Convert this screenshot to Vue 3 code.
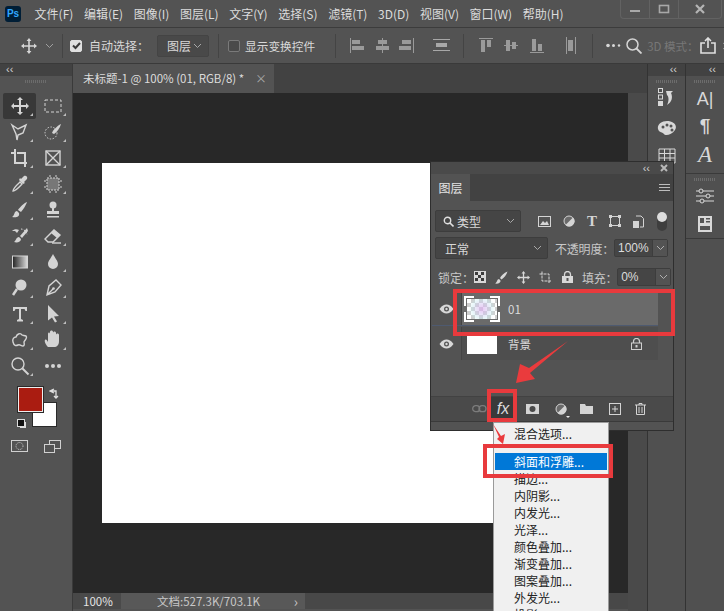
<template>
  <div class="app">
    <!-- menu bar -->
    <header class="menubar">
      <div class="ps-logo">Ps</div>
      <span v-for="m in menus" :key="m" class="menu-item">{{ m }}</span>
      <div class="win-btns">
        <span class="win-btn"><svg width="12" height="12" viewBox="0 0 12 12"><rect x="1" y="7" width="10" height="2" fill="#a8a8a8" /></svg></span>
        <span class="win-btn"><svg width="12" height="12" viewBox="0 0 12 12"><rect x="1.5" y="2.5" width="9" height="7" fill="none" stroke="#a8a8a8" stroke-width="1.6" /></svg></span>
        <span class="win-btn last"><svg width="12" height="12" viewBox="0 0 12 12"><path d="M2 2l8 8M10 2l-8 8" stroke="#b4b4b4" stroke-width="2.2" /></svg></span>
      </div>
    </header>

    <!-- options bar -->
    <div class="optionsbar">
      <svg class="move-ic" width="16" height="16" viewBox="0 0 16 16"><path d="M8 0l2.400 3H8.800v4.200H13V5.600L16 8l-3 2.400V8.800H8.800V13h1.600L8 16l-2.400-3h1.600V8.800H3v1.600L0 8l3-2.400v1.600h4.200V3H5.600z" fill="#d6d6d6" /></svg>
      <svg class="chev move-chev" width="9" height="6" viewBox="0 0 9 6"><path d="M1 1l3.500 3.500L8 1" fill="none" stroke="#a0a0a0" /></svg>
      <i class="vsep sep1"></i>
      <span class="checkbox on"><svg width="9" height="9" viewBox="0 0 9 9"><path d="M1 4.500l2.500 2.500L8 2" fill="none" stroke="#3a3a3a" stroke-width="2" /></svg></span>
      <span class="opt-label auto">自动选择：</span>
      <span class="opt-select">图层<svg class="chev" width="9" height="6" viewBox="0 0 9 6"><path d="M1 1l3.500 3.500L8 1" fill="none" stroke="#a8a8a8" /></svg></span>
      <i class="vsep sep2"></i>
      <span class="checkbox"></span>
      <span class="opt-label show">显示变换控件</span>
      <i class="vsep sep3"></i>
      <svg class="align-a" width="101" height="18" viewBox="0 0 101 18">
        <g fill="#9a9a9a">
          <rect x="0" y="1" width="1" height="15" /><rect x="2" y="3" width="8" height="4" /><rect x="2" y="9" width="12" height="4" />
          <rect x="32" y="1" width="1" height="15" /><rect x="28" y="3" width="9" height="4" /><rect x="26" y="9" width="13" height="4" />
          <rect x="52" y="3" width="9" height="4" /><rect x="49" y="9" width="12" height="4" /><rect x="63" y="1" width="1" height="15" />
        </g>
        <g fill="#a8a8a8"><rect x="83" y="2" width="17" height="1" /><rect x="86" y="6" width="11" height="4" /><rect x="83" y="13" width="17" height="1" /></g>
      </svg>
      <i class="vsep sep-mid"></i>
      <svg class="align-b" width="97" height="18" viewBox="0 0 97 18">
        <g fill="#9a9a9a">
          <rect x="0" y="1" width="14" height="1" /><rect x="2" y="3" width="4" height="12" /><rect x="8" y="3" width="4" height="7" />
          <rect x="25" y="8" width="14" height="1" /><rect x="27" y="3" width="4" height="11" /><rect x="33" y="5" width="4" height="7" />
          <rect x="51" y="15" width="14" height="1" /><rect x="53" y="2" width="4" height="12" /><rect x="59" y="7" width="4" height="7" />
          <rect x="87" y="0" width="1" height="17" /><rect x="89" y="3" width="5" height="11" /><rect x="96" y="0" width="1" height="17" />
        </g>
      </svg>
      <i class="vsep sep4"></i>
      <svg class="more" width="15" height="5" viewBox="0 0 15 5"><g fill="#d8d8d8"><circle cx="2" cy="2.500" r="1.800" /><circle cx="7.500" cy="2.500" r="1.500" /><circle cx="13" cy="2.500" r="1.200" /></g></svg>
      <svg class="opt-search" width="16" height="16" viewBox="0 0 16 16"><circle cx="6.500" cy="6.500" r="5.500" fill="none" stroke="#d4d4d4" stroke-width="1.500" /><path d="M10.500 10.500l5 5" stroke="#d4d4d4" stroke-width="1.800" /></svg>
      <span class="mode3d">3D 模式：</span>
      <svg class="share" width="16" height="17" viewBox="0 0 16 17"><path d="M5 6H1v10h14V6h-4M8 11V1M5 4l3-3 3 3" fill="none" stroke="#e0e0e0" stroke-width="1.600" /></svg>
      <svg class="tail-chev" width="6" height="8" viewBox="0 0 6 8"><path d="M1 1l4 3-4 3" fill="none" stroke="#999" /></svg>
    </div>

    <div class="body">
      <!-- left tools -->
      <aside class="toolcol">
        <div class="collapse-strip left"><span>‹‹</span></div>
        <div class="toolbar">
          <div class="grip"></div>
          <div class="tool-grid">
            <span v-for="(t, i) in tools" :key="i" class="tool" :class="{ active: i === 0 }">
              <svg width="20" height="20" viewBox="0 0 20 20" v-html="t"></svg>
              <i v-if="i % 12 !== 9" class="corner"></i>
            </span>
          </div>
          <div class="colors">
            <div class="fg"></div>
            <div class="bg"></div>
            <svg class="swap" width="11" height="11" viewBox="0 0 11 11"><path d="M1 3h6v6M5 1L1 3l4 2M5 8l2 2 2-2" fill="none" stroke="#e0e0e0" stroke-width="1.300" /></svg>
            <div class="mini-bg"></div>
            <div class="mini-fg"></div>
          </div>
          <div class="mode-row">
            <svg width="18" height="14" viewBox="0 0 18 14"><rect x=".5" y=".5" width="16" height="11" fill="none" stroke="#d0d0d0" /><circle cx="8.500" cy="6" r="3.500" fill="none" stroke="#d0d0d0" stroke-dasharray="1 1" /></svg>
            <svg width="18" height="14" viewBox="0 0 18 14"><rect x="5.500" y=".5" width="11" height="8" fill="none" stroke="#d0d0d0" /><rect x=".5" y="4.500" width="10" height="8" fill="#535353" stroke="#d0d0d0" /></svg>
          </div>
        </div>
      </aside>

      <!-- document -->
      <main class="docarea">
        <div class="tabbar">
          <div class="tab">未标题-1 @ 100% (01, RGB/8) *<span class="tab-x">×</span></div>
        </div>
        <div class="workspace">
          <div class="canvas"></div>
        </div>
        <footer class="statusbar">
          <span class="zoomval">100%</span>
          <span class="docinfo">文档:527.3K/703.1K<em>›</em></span>
        </footer>
      </main>

      <div class="scrollstrip"></div>

      <!-- collapsed docks -->
      <aside class="dock">
        <div class="collapse-strip"><span>‹‹</span></div>
        <div class="dock-panel">
          <div class="grip"></div>
          <svg width="20" height="20" viewBox="0 0 20 20"><g fill="none" stroke="#d8d8d8"><rect x="1.500" y=".5" width="4" height="4" /><rect x="1.500" y="7" width="4" height="4" /></g><rect x="1" y="13" width="5" height="5" fill="#d8d8d8" /><path d="M9 3h7l-2 2c2 4 1 9-4 12 2-4 2-8 0-10z" fill="#d8d8d8" /></svg>
          <svg width="20" height="18" viewBox="0 0 20 18"><path d="M10 2C4 2 0 6 1 10s5 3 6 5 8 1 11-4-2-9-8-9z" fill="#d8d8d8" /><g fill="#535353"><circle cx="6" cy="8" r="1.500" /><circle cx="10" cy="6" r="1.500" /><circle cx="14" cy="7" r="1.500" /><circle cx="15" cy="11" r="1.500" /></g></svg>
          <svg width="18" height="16" viewBox="0 0 18 16"><path d="M1 1h16v14H1zM1 5.500h16M1 10h16M6.500 1v14M12 1v14" fill="none" stroke="#d8d8d8" /></svg>
        </div>
      </aside>
      <aside class="dock second">
        <div class="collapse-strip"><span>‹‹</span></div>
        <div class="dock-panel tall">
          <div class="grip"></div>
          <span class="glyph-a">A|</span>
          <span class="glyph-p">¶</span>
          <span class="glyph-s">A</span>
        </div>
        <div class="dock-panel short">
          <div class="grip"></div>
          <svg width="18" height="16" viewBox="0 0 18 16"><g fill="none" stroke="#d8d8d8"><path d="M0 3h18M0 8h18M0 13h18" /><circle cx="5" cy="3" r="2" fill="#535353" /><circle cx="12" cy="8" r="2" fill="#535353" /><circle cx="6" cy="13" r="2" fill="#535353" /></g></svg>
          <svg width="14" height="16" viewBox="0 0 14 16"><rect width="14" height="16" fill="#d8d8d8" /><g fill="#535353"><rect x="2" y="2" width="4" height="5" /><rect x="8" y="2" width="4" height="1.500" /><rect x="8" y="5" width="4" height="1.500" /><rect x="2" y="10" width="10" height="4" /></g></svg>
        </div>
        <div class="dock-rest"></div>
      </aside>

      <!-- floating layers panel -->
      <section class="layers">
        <div class="layers-head">
          <span class="lh-arrows">‹‹</span>
          <svg width="8" height="8" viewBox="0 0 8 8"><path d="M1 1l6 6M7 1L1 7" stroke="#b8b8b8" stroke-width="2" /></svg>
        </div>
        <div class="layers-tabs">
          <div class="ltab">图层</div>
          <svg class="hamb" width="11" height="8" viewBox="0 0 11 8"><path d="M0 .5h11M0 3.500h11M0 6.500h11" stroke="#bdbdbd" /></svg>
        </div>
        <div class="lbody">
          <div class="filter-row">
            <div class="lselect kind">
              <svg width="11" height="11" viewBox="0 0 11 11"><circle cx="4.500" cy="4.500" r="3.200" fill="none" stroke="#e0e0e0" stroke-width="1.400" /><path d="M7 7l3.500 3.500" stroke="#e0e0e0" stroke-width="1.600" /></svg>
              <span>类型</span>
              <svg class="chev push" width="9" height="6" viewBox="0 0 9 6"><path d="M1 1l3.500 3.500L8 1" fill="none" stroke="#a8a8a8" /></svg>
            </div>
            <div class="filter-icons">
              <svg width="13" height="11" viewBox="0 0 13 11"><rect x=".5" y=".5" width="12" height="10" fill="none" stroke="#d4d4d4" /><path d="M2 9l3-4 2 2 2-2 2 4z" fill="#d4d4d4" /></svg>
              <svg width="12" height="12" viewBox="0 0 12 12"><circle cx="6" cy="6" r="5" fill="#6a6a6a" stroke="#d4d4d4" /><path d="M10 2.500A5 5 0 0 1 2.500 10z" fill="#d4d4d4" /></svg>
              <span class="t-ic">T</span>
              <svg width="12" height="12" viewBox="0 0 12 12"><rect x="1.500" y="1.500" width="9" height="9" fill="none" stroke="#d4d4d4" /><g fill="#d4d4d4"><rect width="3" height="3" /><rect x="9" width="3" height="3" /><rect y="9" width="3" height="3" /><rect x="9" y="9" width="3" height="3" /></g></svg>
              <svg width="11" height="13" viewBox="0 0 11 13"><path d="M3 1h5l2.500 2.500V12H7" fill="none" stroke="#d4d4d4" /><rect y="6" width="6" height="7" fill="#d4d4d4" /></svg>
            </div>
            <div class="toggle"><i></i></div>
          </div>
          <div class="blend-row">
            <div class="lselect blend">
              <span>正常</span>
              <svg class="chev push" width="9" height="6" viewBox="0 0 9 6"><path d="M1 1l3.500 3.500L8 1" fill="none" stroke="#a8a8a8" /></svg>
            </div>
            <span class="lbl">不透明度：</span>
            <div class="numbox"><span>100%</span><b><svg width="9" height="6" viewBox="0 0 9 6"><path d="M1 1l3.500 3.500L8 1" fill="none" stroke="#b0b0b0" /></svg></b></div>
          </div>
          <div class="lock-row">
            <span class="lbl">锁定：</span>
            <div class="lock-icons">
              <svg width="12" height="12" viewBox="0 0 12 12"><rect width="12" height="12" fill="#d8d8d8" /><g fill="#3c3c3c"><rect x="1" y="1" width="3" height="3" /><rect x="7" y="1" width="3" height="3" /><rect x="4" y="4" width="3" height="3" /><rect x="1" y="7" width="3" height="3" /><rect x="7" y="7" width="3" height="3" /></g></svg>
              <svg width="13" height="13" viewBox="0 0 13 13"><path d="M12.500.5C9 2 6 5 5 7l1.500 1.500C9 7 11.500 4 12.500.5zM4 8c-2 0-1.500 3-4 4.500 3 .5 6-.5 5.500-3z" fill="#d8d8d8" /></svg>
              <svg width="13" height="13" viewBox="0 0 16 16"><path d="M8 0l2.400 3H8.800v4.200H13V5.600L16 8l-3 2.400V8.800H8.800V13h1.600L8 16l-2.400-3h1.600V8.800H3v1.600L0 8l3-2.400v1.600h4.200V3H5.600z" fill="#d8d8d8" /></svg>
              <svg width="14" height="13" viewBox="0 0 14 13"><path d="M3 .5v9.500h9M.5 3h9.500v9" fill="none" stroke="#d8d8d8" stroke-dasharray="3 1" /></svg>
              <svg width="11" height="12" viewBox="0 0 11 12"><rect y="5" width="11" height="7" fill="#d8d8d8" /><path d="M2.500 5V3.500a3 3 0 0 1 6 0V5" fill="none" stroke="#d8d8d8" stroke-width="1.300" /><rect x="4.500" y="7" width="2" height="3" fill="#535353" /></svg>
            </div>
            <span class="lbl fill">填充：</span>
            <div class="numbox"><span>0%</span><b><svg width="9" height="6" viewBox="0 0 9 6"><path d="M1 1l3.500 3.500L8 1" fill="none" stroke="#b0b0b0" /></svg></b></div>
          </div>
          <div class="list">
            <div v-for="l in layerRows" :key="l.name" class="lrow" :class="{ sel: l.sel }">
              <span class="eye"><svg width="15" height="10" viewBox="0 0 15 10"><path d="M.5 5C3 1.500 5 .5 7.500.5S12 1.500 14.500 5C12 8.500 10 9.500 7.500 9.500S3 8.500.5 5z" fill="#d8d8d8" /><circle cx="7.500" cy="5" r="2.500" fill="#535353" /><circle cx="7.500" cy="5" r="1.200" fill="#d8d8d8" /></svg></span>
              <span class="thumb" :class="{ checker: l.sel }">
                <template v-if="l.sel"><i class="crn tl"></i><i class="crn tr"></i><i class="crn bl"></i><i class="crn br"></i></template>
              </span>
              <span class="lname">{{ l.name }}</span>
              <svg v-if="!l.sel" class="lk" width="11" height="12" viewBox="0 0 11 12"><rect x=".5" y="5" width="10" height="6.500" fill="none" stroke="#cfcfcf" /><path d="M2.500 5V3.500a3 3 0 0 1 6 0V5" fill="none" stroke="#cfcfcf" stroke-width="1.200" /><rect x="4.500" y="7" width="2" height="2.500" fill="#cfcfcf" /></svg>
            </div>
          </div>
        </div>
        <div class="lfooter">
          <svg width="15" height="8" viewBox="0 0 15 8"><g fill="none" stroke="#7c7c7c" stroke-width="1.300"><rect x=".7" y=".7" width="7" height="6" rx="3" /><rect x="7" y=".7" width="7" height="6" rx="3" /></g></svg>
          <span class="fx">fx<i></i></span>
          <svg width="13" height="10" viewBox="0 0 13 10"><rect width="13" height="10" fill="#d4d4d4" /><circle cx="6.500" cy="5" r="3" fill="#4a4a4a" /></svg>
          <span class="adj"><svg width="12" height="12" viewBox="0 0 12 12"><circle cx="6" cy="6" r="5" fill="#6a6a6a" stroke="#d4d4d4" /><path d="M10 2.500A5 5 0 0 1 2.500 10z" fill="#d4d4d4" /></svg><i></i></span>
          <svg width="13" height="10" viewBox="0 0 13 10"><path d="M0 0h5l1 2h7v8H0z" fill="#d4d4d4" /></svg>
          <svg width="12" height="12" viewBox="0 0 12 12"><rect x=".5" y=".5" width="11" height="11" fill="none" stroke="#d4d4d4" /><path d="M6 3v6M3 6h6" stroke="#d4d4d4" /></svg>
          <svg width="11" height="12" viewBox="0 0 11 12"><path d="M0 2h11M4 2V.5h3V2M1.500 2v9.500h8V2M4 4v6M7 4v6" fill="none" stroke="#d4d4d4" /></svg>
        </div>

        <!-- fx dropdown -->
        <ul class="fxmenu">
          <li v-for="m in fxItems" :key="m" :class="{ hot: m === '斜面和浮雕...' }">{{ m }}</li>
        </ul>

        <!-- red annotations -->
        <i class="redbox rb1"></i>
        <i class="redbox rb2"></i>
        <i class="redbox rb3"></i>
        <svg class="arrows" width="190" height="110" viewBox="0 0 190 110">
          <path d="M137 1L98 28 89 24 85 43 104 39 99 33z" fill="#ea3b3d" />
          <path d="M62 84L70 96 74 94 72 104 66 99 68 97z" fill="#ea3b3d" />
        </svg>
      </section>
    </div>
  </div>
</template>

<script setup>
const menus = ['文件(F)', '编辑(E)', '图像(I)', '图层(L)', '文字(Y)', '选择(S)', '滤镜(T)', '3D(D)', '视图(V)', '窗口(W)', '帮助(H)']

const s = 'fill="none" stroke="#d4d4d4" stroke-width="1.400"'
const f = 'fill="#d4d4d4"'
const tools = [
  `<path d="M10 1l3 3h-2v5h5V7l3 3-3 3v-2h-5v5h2l-3 3-3-3h2v-5H4v2l-3-3 3-3v2h5V4H7z" ${f}/>`,
  `<rect x="2" y="4" width="16" height="12" fill="none" stroke="#d4d4d4" stroke-dasharray="3 2"/>`,
  `<path d="M2 3l6 4 8-4-3 8-5 2-1 5-1-6z" ${s}/>`,
  `<circle cx="8" cy="11" r="6" fill="none" stroke="#d4d4d4" stroke-dasharray="1.500 1.500"/><path d="M9 11c1-3 5-7 9-9-1 4-4 8-7 10z" ${f}/>`,
  `<path d="M1 5h4M5 1v14h12M7 5h8v14" fill="none" stroke="#d4d4d4" stroke-width="2"/>`,
  `<rect x="3" y="3" width="14" height="14" ${s}/><path d="M3 3l14 14M17 3L3 17" ${s}/>`,
  `<path d="M3 17c0-3 6-8 7-9l2 2c-1 1-6 7-9 7z" ${s}/><path d="M11 5l3-3c2-1 4 1 3 3l-3 3 1 1-2 1-4-4 1-2z" ${f}/>`,
  `<rect x="4" y="4" width="12" height="12" fill="#777" stroke="#d4d4d4" stroke-dasharray="2 1"/><path d="M1 7h2M1 13h2M17 7h2M17 13h2M7 1v2M13 1v2M7 17v2M13 17v2" stroke="#d4d4d4"/>`,
  `<path d="M17 2c-3 1-7 5-9 8l3 2c2-2 5-7 6-10zM7 11c-3 0-2 4-5 6 4 1 8 0 7-4z" ${f}/>`,
  `<circle cx="10" cy="5" r="3.500" ${f}/><path d="M9 8h2v3h5v3H4v-3h5zM4 16h12v1.500H4z" ${f}/>`,
  `<path d="M17 2l-7 8 2 2 6-7z" ${f}/><path d="M9 11c-3 0-3 4-5 5 3 1 7 0 7-3zM2 5c2-2 5-2 7-1L7 7 5 5z" ${f}/><path d="M11 3c3 0 6 3 6 6" fill="none" stroke="#d4d4d4" stroke-dasharray="1.500 1.500"/>`,
  `<path d="M2 13l9-9 6 5-7 7H5z" ${s}/><path d="M11 4l6 5-3 3-6-5z" ${f}/><path d="M9 17h9" ${s}/>`,
  `<defs><linearGradient id="tg"><stop offset="0" stop-color="#222"/><stop offset="1" stop-color="#ddd"/></linearGradient></defs><rect x="2.500" y="4" width="15" height="12" fill="url(#tg)" stroke="#d4d4d4"/>`,
  `<path d="M10 2c2 4 5 7 5 10a5 5 0 0 1-10 0c0-3 3-6 5-10z" ${f}/>`,
  `<circle cx="11" cy="7" r="5.500" ${f}/><path d="M7 11l-4 6" stroke="#d4d4d4" stroke-width="2.500"/>`,
  `<path d="M4 17l2-9 7-6 5 5-6 7zM4 17l6-6" ${s}/><circle cx="10.500" cy="10.500" r="1.300" ${f}/>`,
  `<path d="M3 3h14v4h-1.500l-1-2H11v10l2 1v1.500H7V16l2-1V5H5.500l-1 2H3z" ${f}/>`,
  `<path d="M5 1l11 11-5 .5 3 5-2 1-3-5-4 3z" ${f}/>`,
  `<path d="M3 12c-1-3 1-5 3-5 1-3 4-4 5-3 1 2 3 1 5 2 2 2-2 5-2 6s1 4-1 4-3-2-5-1-4 1-5-3z" ${s}/>`,
  `<path d="M5 17c-2-2-4-6-3-7s2 0 3 2V4c0-2 2-2 2 0V2c0-2 3-2 3 0v1c0-2 3-2 3 0v2c0-2 3-2 3 0v6c0 4-2 6-5 6z" ${f}/>`,
  `<circle cx="8" cy="8" r="6" ${s}/><path d="M12.500 12.500l6 6" stroke="#d4d4d4" stroke-width="2"/>`,
  `<g ${f}><circle cx="4" cy="10" r="2"/><circle cx="10" cy="10" r="2"/><circle cx="16" cy="10" r="2"/></g>`
]

const layerRows = [
  { name: '01', sel: true },
  { name: '背景', sel: false }
]

const fxItems = ['混合选项...', '斜面和浮雕...', '描边...', '内阴影...', '内发光...', '光泽...', '颜色叠加...', '渐变叠加...', '图案叠加...', '外发光...', '投影...']
</script>

<style>
html, body {
  margin: 0;
  background: #535353;
  overflow: hidden;
}
</style>

<style scoped>
.app {
  width: 724px;
  height: 611px;
  display: flex;
  flex-direction: column;
  background: #535353;
  font-family: "Noto Sans CJK SC", "Liberation Sans", sans-serif;
  color: #d8d8d8;
  font-size: 12px;
  overflow: hidden;
}

/* menu bar */
.menubar {
  height: 27px;
  display: flex;
  align-items: center;
  gap: 10.600px;
  padding-left: 5px;
  border-bottom: 1px solid #3c3c3c;
  flex-shrink: 0;
}
.ps-logo {
  width: 16px;
  height: 16px;
  border-radius: 3px;
  background: #001e36;
  color: #31a8ff;
  font: bold 10px/16px "Liberation Sans", sans-serif;
  text-align: center;
  margin-right: 3px;
}
.menu-item {
  font-size: 12px;
  color: #dcdcdc;
  white-space: nowrap;
}
.win-btns {
  margin-left: auto;
  align-self: flex-start;
  display: flex;
  height: 18px;
  border: 1px solid #626262;
  border-top: none;
  border-radius: 0 0 4px 4px;
  margin-right: 2px;
}
.win-btn {
  width: 28px;
  display: flex;
  align-items: center;
  justify-content: center;
  border-right: 1px solid #626262;
}
.win-btn.last {
  border-right: none;
  width: 42px;
}

/* options bar */
.optionsbar {
  height: 35px;
  display: flex;
  align-items: center;
  border-bottom: 1px solid #3a3a3a;
  flex-shrink: 0;
  white-space: nowrap;
}
.optionsbar svg {
  flex-shrink: 0;
}
.move-ic {
  margin-left: 21px;
}
.move-chev {
  margin-left: 8px;
}
.vsep {
  width: 1px;
  height: 24px;
  background: #444;
  flex-shrink: 0;
}
.sep1 {
  margin: 0 7px 0 8px;
}
.checkbox {
  width: 12px;
  height: 12px;
  border-radius: 2px;
  display: flex;
  align-items: center;
  justify-content: center;
  flex-shrink: 0;
  box-sizing: border-box;
  border: 1px solid #7a7a7a;
  background: #4a4a4a;
}
.checkbox.on {
  background: #e0e0e0;
  border-color: #e0e0e0;
}
.opt-label {
  font-size: 12px;
  color: #d8d8d8;
}
.auto {
  margin-left: 7px;
  width: 68px;
  flex-shrink: 0;
}
.opt-select {
  width: 52px;
  height: 22px;
  background: #494949;
  border: 1px solid #444;
  border-radius: 2px;
  display: flex;
  align-items: center;
  justify-content: space-between;
  padding: 0 6px 0 9px;
  box-sizing: border-box;
  flex-shrink: 0;
}
.sep2 {
  margin: 0 9px;
}
.show {
  margin-left: 5px;
  font-size: 11.700px;
}
.sep3 {
  margin-left: 20px;
  margin-right: 14px;
}
.sep-mid {
  margin: 0 15px 0 12px;
}
.sep4 {
  margin: 0 13px 0 16px;
}
.opt-search {
  margin-left: 5px;
}
.mode3d {
  color: #777;
  font-size: 11.500px;
  margin-left: 5px;
  width: 53px;
  flex-shrink: 0;
}
.tail-chev {
  margin-left: 6px;
}

/* main row */
.body {
  flex: 1;
  display: flex;
  position: relative;
  min-height: 0;
}
.collapse-strip {
  height: 12px;
  background: #424242;
  font: 11px/11px "Liberation Sans", sans-serif;
  color: #d0d0d0;
  text-align: right;
  padding-right: 8px;
}
.collapse-strip.left {
  text-align: left;
  padding-left: 6px;
  padding-right: 0;
}
.toolcol {
  width: 72px;
  flex-shrink: 0;
  border-right: 1px solid #3a3a3a;
  display: flex;
  flex-direction: column;
}
.toolbar {
  flex: 1;
  background: #535353;
}
.grip {
  height: 3px;
  margin: 4px auto 0;
  width: 22px;
  background: repeating-linear-gradient(90deg, #6c6c6c 0 1px, transparent 1px 2px);
}
.tool-grid {
  display: grid;
  grid-template-columns: 33px 33px;
  grid-auto-rows: 26px;
  margin: 10px 0 0 3px;
}
.tool {
  position: relative;
  display: flex;
  align-items: center;
  justify-content: center;
}
.tool.active {
  background: #383838;
  border-radius: 2px;
}
.corner {
  position: absolute;
  right: 3px;
  bottom: 3px;
  border-left: 3px solid transparent;
  border-bottom: 3px solid #bdbdbd;
}
.colors {
  position: relative;
  height: 53px;
  margin-top: 8px;
}
.fg {
  position: absolute;
  left: 18px;
  top: 0;
  width: 23px;
  height: 23px;
  background: #aa1c11;
  border: 1px solid #eee;
  outline: 1px solid #2a2a2a;
  z-index: 1;
}
.bg {
  position: absolute;
  left: 33px;
  top: 16px;
  width: 23px;
  height: 23px;
  background: #fff;
  outline: 1px solid #2a2a2a;
}
.swap {
  position: absolute;
  left: 49px;
  top: 1px;
}
.mini-bg {
  position: absolute;
  left: 20px;
  top: 35px;
  width: 6px;
  height: 6px;
  background: #ddd;
}
.mini-fg {
  position: absolute;
  left: 17px;
  top: 32px;
  width: 6px;
  height: 6px;
  background: #111;
  border: 1px solid #ddd;
}
.mode-row {
  display: flex;
  gap: 15px;
  margin-left: 11px;
}

/* document */
.docarea {
  width: 555px;
  flex-shrink: 0;
  display: flex;
  flex-direction: column;
}
.tabbar {
  height: 29px;
  background: #424242;
  display: flex;
  flex-shrink: 0;
}
.tab {
  background: #535353;
  width: 201px;
  padding-left: 10px;
  box-sizing: border-box;
  font-size: 11.500px;
  line-height: 29px;
  white-space: nowrap;
  color: #dcdcdc;
}
.tab-x {
  margin-left: 11px;
  color: #aaa;
}
.workspace {
  flex: 1;
  background: #282828;
  padding: 70px 0 0 29px;
  min-height: 0;
}
.canvas {
  width: 400px;
  height: 360px;
  background: #fff;
}
.statusbar {
  height: 16px;
  background: #484848;
  display: flex;
  margin-bottom: 2px;
  font-size: 11.500px;
  line-height: 16px;
  flex-shrink: 0;
}
.zoomval {
  width: 41px;
  margin-left: 7px;
  padding-left: 3px;
  box-sizing: border-box;
  background: #4a4a4a;
  color: #e4e4e4;
}
.docinfo {
  width: 184px;
  padding-left: 36px;
  box-sizing: border-box;
  background: #585858;
  color: #c8c8c8;
  display: flex;
  justify-content: space-between;
  padding-right: 7px;
}
.docinfo em {
  font-style: normal;
  font-size: 14px;
}

/* docks */
.scrollstrip {
  width: 19px;
  background: linear-gradient(#424242 0 29px, #4a4a4a 29px);
  flex-shrink: 0;
  border-right: 1px solid #333;
}
.dock {
  width: 37px;
  flex-shrink: 0;
  display: flex;
  flex-direction: column;
  border-right: 1px solid #333;
}
.dock.second {
  flex: 1;
  border-right: none;
}
.dock-panel {
  flex: 1;
  display: flex;
  flex-direction: column;
  align-items: center;
  gap: 11px;
  background: #505050;
}
.dock-panel .grip {
  margin-bottom: -6px;
}
.tall {
  flex: none;
  height: 98px;
  box-sizing: border-box;
  border-bottom: 1px solid #3a3a3a;
  gap: 3px;
}
.tall .grip {
  margin-bottom: 1px;
}
.short {
  flex: none;
  height: 65px;
  box-sizing: border-box;
  border-bottom: 1px solid #3a3a3a;
  gap: 12px;
}
.short .grip {
  margin-bottom: -5px;
}
.dock-rest {
  flex: 1;
  background: #505050;
}
.glyph-a {
  font: 18px/24px "Liberation Sans", sans-serif;
  color: #d8d8d8;
}
.glyph-p {
  font: bold 19px/24px "Liberation Sans", sans-serif;
  color: #d8d8d8;
}
.glyph-s {
  font: italic 23px/26px "Liberation Serif", serif;
  color: #d8d8d8;
  margin-top: 1px;
}

/* layers panel */
.layers {
  position: absolute;
  left: 430px;
  top: 97px;
  width: 244px;
  height: 270px;
  background: #535353;
  border: 1px solid #2e2e2e;
  box-sizing: border-box;
  display: flex;
  flex-direction: column;
}
.layers-head {
  height: 12px;
  background: #4a4a4a;
  display: flex;
  justify-content: flex-end;
  align-items: center;
  gap: 10px;
  padding-right: 5px;
  font: 11px/11px "Liberation Sans", sans-serif;
  color: #cfcfcf;
}
.layers-tabs {
  height: 27px;
  background: #424242;
  display: flex;
  justify-content: space-between;
  align-items: center;
  padding-right: 3px;
}
.ltab {
  width: 39px;
  height: 27px;
  line-height: 27px;
  background: #535353;
  text-align: center;
  font-size: 12px;
  color: #e4e4e4;
}
.lbody {
  flex: 1;
  padding: 8px 4px 0;
}
.filter-row {
  display: flex;
  align-items: center;
  height: 24px;
}
.lselect {
  background: #454545;
  border: 1px solid #3d3d3d;
  border-radius: 2px;
  box-sizing: border-box;
  display: flex;
  align-items: center;
  padding: 0 5px 0 7px;
  gap: 3px;
  font-size: 12px;
}
.kind {
  width: 86px;
  height: 22px;
}
.blend {
  width: 117px;
  height: 22px;
  padding-left: 9px;
}
.push {
  margin-left: auto;
}
.filter-icons {
  margin-left: 17px;
  display: flex;
  align-items: center;
  gap: 12px;
}
.t-ic {
  font: bold 15px/15px "Liberation Serif", serif;
  color: #d4d4d4;
}
.toggle {
  margin-left: auto;
  margin-right: 2px;
  width: 10px;
  height: 19px;
  border-radius: 5px;
  background: #3e3e3e;
  position: relative;
}
.toggle i {
  position: absolute;
  left: 0;
  top: 0;
  width: 10px;
  height: 10px;
  border-radius: 50%;
  background: #dcdcdc;
}
.blend-row,
.lock-row {
  display: flex;
  align-items: center;
  height: 24px;
  margin-top: 5px;
}
.blend-row {
  margin-top: 3px;
}
.lbl {
  font-size: 12px;
  color: #c8c8c8;
  white-space: nowrap;
}
.blend-row .lbl {
  margin-left: 7px;
  letter-spacing: -0.200px;
}
.numbox {
  margin-left: auto;
  flex: none;
  width: 54px;
  height: 18px;
  display: flex;
  background: #454545;
  border: 1px solid #3d3d3d;
  border-radius: 2px;
  box-sizing: border-box;
  font: 12px/16px "Liberation Sans", sans-serif;
  color: #dcdcdc;
  margin-right: 1px;
}
.numbox span {
  flex: 1;
  padding-left: 3px;
}
.numbox b {
  width: 14px;
  display: flex;
  align-items: center;
  justify-content: center;
  background: #535353;
  border-left: 1px solid #3d3d3d;
}
.lock-row .lbl {
  padding-left: 3px;
}
.lock-icons {
  display: flex;
  align-items: center;
  gap: 9px;
}
.lbl.fill {
  margin-left: 6px;
  letter-spacing: -0.300px;
}
.list {
  margin-top: 4px;
  margin-left: -3px;
}
.lrow {
  height: 33px;
  display: flex;
  align-items: center;
  position: relative;
  background: #4e4e4e;
  margin-bottom: 1px;
  margin-right: 11px;
}
.lrow.sel {
  background: #6a6a6a;
  border-bottom: 1px solid #4e5a70;
  box-sizing: border-box;
}
.eye {
  width: 30px;
  align-self: stretch;
  display: flex;
  align-items: center;
  justify-content: center;
  background: #535353;
  border-right: 1px solid #444;
  flex-shrink: 0;
  box-sizing: border-box;
}
.thumb {
  width: 30px;
  height: 20px;
  background: #fff;
  margin-left: 5px;
  position: relative;
  flex-shrink: 0;
}
.thumb.checker {
  background:
    radial-gradient(circle at 50% 50%, rgba(222, 170, 240, 0.65), rgba(190, 235, 240, 0.35) 55%, transparent 75%),
    repeating-conic-gradient(#cfcfcf 0 25%, #fff 0 50%) 0 0 / 8px 8px;
}
.crn {
  position: absolute;
  width: 8px;
  height: 8px;
  border: 0 solid #fff;
}
.tl { left: -3px; top: -3px; border-width: 2px 0 0 2px; }
.tr { right: -3px; top: -3px; border-width: 2px 2px 0 0; }
.bl { left: -3px; bottom: -3px; border-width: 0 0 2px 2px; }
.br { right: -3px; bottom: -3px; border-width: 0 2px 2px 0; }
.lname {
  margin-left: 11px;
  font-size: 11.500px;
  color: #dcdcdc;
}
.lk {
  margin-left: auto;
  margin-right: 16px;
}
.lfooter {
  height: 24px;
  background: #4a4a4a;
  border-top: 1px solid #424242;
  display: flex;
  align-items: center;
  padding-left: 41px;
  margin-bottom: 9px;
  box-shadow: 0 1px 0 #3a3a3a;
}
.lfooter > :nth-child(2) { margin-left: 4px; }
.lfooter > :nth-child(3) { margin-left: 11px; }
.lfooter > :nth-child(4) { margin-left: 16px; }
.lfooter > :nth-child(5) { margin-left: 13px; }
.lfooter > :nth-child(6) { margin-left: 16px; }
.lfooter > :nth-child(7) { margin-left: 14px; }
.fx {
  position: relative;
  width: 24px;
  height: 24px;
  background: #3a3a3a;
  font: italic 16px/24px "Liberation Sans", sans-serif;
  color: #dcdcdc;
  text-align: center;
}
.fx i,
.adj i {
  position: absolute;
  right: 2px;
  bottom: 1px;
  border: 2px solid transparent;
  border-top-color: #eee;
  border-bottom: none;
}
.adj {
  position: relative;
  display: flex;
  width: 12px;
}
.adj i {
  right: -3px;
  bottom: -3px;
}

/* dropdown */
.fxmenu {
  list-style: none;
  position: absolute;
  left: 62px;
  top: 260px;
  width: 116px;
  height: 190px;
  margin: 0;
  padding: 2px 1px 0;
  box-sizing: border-box;
  background: #f0f0f0;
  border: 1px solid #9a9a9a;
  overflow: hidden;
  z-index: 2;
}
.fxmenu li {
  height: 17px;
  line-height: 17px;
  padding-left: 19px;
  font-size: 12px;
  color: #222;
  white-space: nowrap;
}
.fxmenu li:first-child {
  margin-bottom: 11px;
}
.fxmenu li.hot {
  background: #0078d7;
  color: #fff;
}

/* annotations */
.redbox {
  position: absolute;
  border: 4px solid #e83a3d;
  box-sizing: border-box;
  z-index: 3;
}
.rb1 {
  left: 22px;
  top: 127px;
  width: 222px;
  height: 47px;
}
.rb2 {
  left: 56px;
  top: 227px;
  width: 30px;
  height: 33px;
}
.rb3 {
  left: 52px;
  top: 282px;
  width: 130px;
  height: 34px;
}
.arrows {
  position: absolute;
  left: 0;
  top: 178px;
  z-index: 4;
  pointer-events: none;
  overflow: visible;
}
</style>
